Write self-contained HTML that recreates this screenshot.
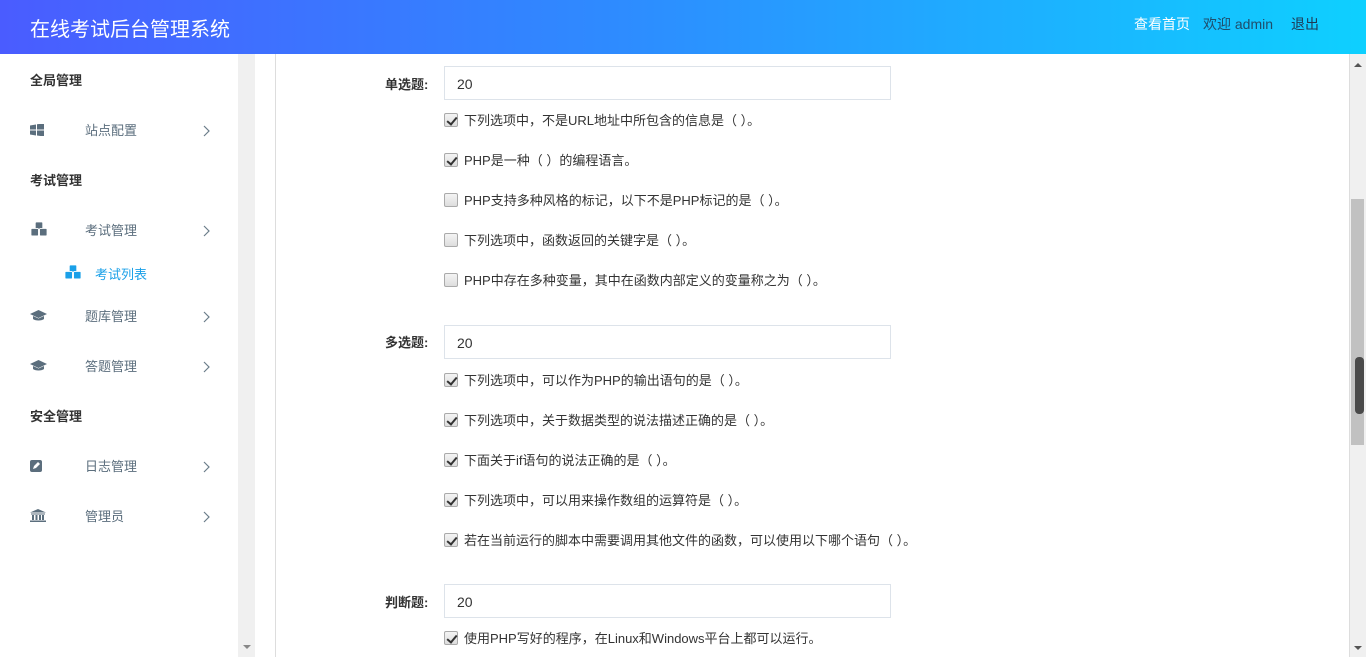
<!DOCTYPE html>
<html><head><meta charset="utf-8"><style>
*{margin:0;padding:0;box-sizing:border-box}
body{width:1366px;height:657px;overflow:hidden;position:relative;background:#fff;font-family:"Liberation Sans","Noto Sans CJK SC",sans-serif;font-size:13px;color:#333}
.hd{position:absolute;left:0;top:0;width:1366px;height:54px;background:linear-gradient(90deg,#4a5cff 0%,#2e8bff 45%,#0ed0ff 100%)}
.hd .t{position:absolute;left:30px;top:13px;color:#fff;font-size:20px}
.hd .r{position:absolute;top:14px;font-size:14px}
.a{position:absolute;font-size:13px}
.sec{position:absolute;left:30px;font-weight:bold;font-size:13px;color:#333}
.it{position:absolute;left:85px;color:#5b6e7d;font-size:13px}
.ic{position:absolute;left:30px;width:14px;height:12px}
.ar{position:absolute;left:203px;width:7px;height:12px}
.lb{position:absolute;left:385px;font-weight:bold;font-size:13px;color:#333}
.in{position:absolute;left:444px;width:447px;height:34px;border:1px solid #dde3ea;padding-left:12px;line-height:34px;font-size:14px;color:#333}
.cb{position:absolute;left:444px;width:14px;height:14px;border:1px solid #aaa;border-radius:2px;background:linear-gradient(#f4f4f4,#ddd)}
.cb.c::after{content:"";position:absolute;left:4px;top:1px;width:4px;height:8px;border:solid #333;border-width:0 2px 2px 0;transform:rotate(40deg)}
.q{position:absolute;left:464px;font-size:13px;color:#333}
</style></head><body>
<div class="hd"><div class="t">在线考试后台管理系统</div>
<div class="r" style="left:1134px;color:#fff">查看首页</div>
<div class="r" style="left:1203px;color:#1f4d6b">欢迎 admin</div>
<div class="r" style="left:1291px;color:#1f3a55">退出</div></div>

<div style="position:absolute;left:238px;top:54px;width:17px;height:603px;background:#f0f0f0"></div>
<div style="position:absolute;left:243px;top:645px;border:4px solid transparent;border-top:4px solid #888;border-bottom:0"></div>
<div style="position:absolute;left:275px;top:54px;width:1px;height:603px;background:#ddd"></div>
<div style="position:absolute;left:1349px;top:54px;width:17px;height:603px;background:#f0f0f0;border-left:1px solid #ddd"></div>
<div style="position:absolute;left:1351px;top:199px;width:13px;height:246px;background:#c1c1c1"></div>
<div style="position:absolute;left:1355px;top:357px;width:9px;height:57px;background:#4a4a4a;border-radius:4px"></div>
<div style="position:absolute;left:1354px;top:63px;border:4px solid transparent;border-bottom:4px solid #555;border-top:0"></div>
<div style="position:absolute;left:1354px;top:646px;border:4px solid transparent;border-top:4px solid #555;border-bottom:0"></div>

<div class="sec" style="top:70px">全局管理</div>
<svg class="ic" style="top:124px" viewBox="0 0 14 12"><path fill="#5b6e7d" d="M0 1.5l6-1v5H0zM7 .3l7-1v6.2H7zM0 6.5h6v5l-6-1zM7 6.5h7v6l-7-1z"/></svg>
<div class="it" style="top:120px">站点配置</div><svg class="ar" style="top:125px" viewBox="0 0 7 12"><path d="M1 1l5 5-5 5" fill="none" stroke="#6b7d8a" stroke-width="1.2"/></svg>
<div class="sec" style="top:170px">考试管理</div>
<svg class="ic" style="top:222px;width:18px;height:15px" viewBox="0 0 16 14"><g fill="#5b6e7d" stroke="#fff" stroke-width=".8"><rect x="4.5" y="0" width="7" height="7" rx="1"/><rect x="0.5" y="6" width="7" height="7" rx="1"/><rect x="8.5" y="6" width="7" height="7" rx="1"/></g></svg>
<div class="it" style="top:220px">考试管理</div><svg class="ar" style="top:225px" viewBox="0 0 7 12"><path d="M1 1l5 5-5 5" fill="none" stroke="#6b7d8a" stroke-width="1.2"/></svg>
<svg style="position:absolute;left:64px;top:265px" width="18" height="15" viewBox="0 0 16 14"><g fill="#1aa0e8" stroke="#fff" stroke-width=".8"><rect x="4.5" y="0" width="7" height="7" rx="1"/><rect x="0.5" y="6" width="7" height="7" rx="1"/><rect x="8.5" y="6" width="7" height="7" rx="1"/></g></svg>
<div class="a" style="left:95px;top:264px;color:#1aa0e8">考试列表</div>
<svg class="ic" style="top:310px;width:17px" viewBox="0 0 17 12"><path fill="#5b6e7d" d="M8.5 0L17 4 8.5 8 0 4zM3 6v3c2 2 9 2 11 0V6l-5.5 2.5z"/></svg>
<div class="it" style="top:306px">题库管理</div><svg class="ar" style="top:311px" viewBox="0 0 7 12"><path d="M1 1l5 5-5 5" fill="none" stroke="#6b7d8a" stroke-width="1.2"/></svg>
<svg class="ic" style="top:360px;width:17px" viewBox="0 0 17 12"><path fill="#5b6e7d" d="M8.5 0L17 4 8.5 8 0 4zM3 6v3c2 2 9 2 11 0V6l-5.5 2.5z"/></svg>
<div class="it" style="top:356px">答题管理</div><svg class="ar" style="top:361px" viewBox="0 0 7 12"><path d="M1 1l5 5-5 5" fill="none" stroke="#6b7d8a" stroke-width="1.2"/></svg>
<div class="sec" style="top:406px">安全管理</div>
<svg class="ic" style="top:460px;width:12px" viewBox="0 0 12 12"><rect width="12" height="12" rx="2" fill="#5b6e7d"/><path d="M3 9l1-3 4-4 2 2-4 4z" fill="#fff"/></svg>
<div class="it" style="top:456px">日志管理</div><svg class="ar" style="top:461px" viewBox="0 0 7 12"><path d="M1 1l5 5-5 5" fill="none" stroke="#6b7d8a" stroke-width="1.2"/></svg>
<svg class="ic" style="top:509px;width:16px;height:13px" viewBox="0 0 16 13"><path fill="#5b6e7d" d="M8 0l8 3.5H0zM1 4.5h14v1H1zM2 6h2v5H2zM5.5 6h2v5h-2zM9 6h2v5H9zM12 6h2v5h-2zM0 11.5h16V13H0z"/></svg>
<div class="it" style="top:506px">管理员</div><svg class="ar" style="top:511px" viewBox="0 0 7 12"><path d="M1 1l5 5-5 5" fill="none" stroke="#6b7d8a" stroke-width="1.2"/></svg>

<div class="lb" style="top:74px">单选题:</div><div class="in" style="top:66px">20</div>
<div class="cb c" style="top:113px"></div><div class="q" style="top:110px">下列选项中，不是URL地址中所包含的信息是（ ）。</div>
<div class="cb c" style="top:153px"></div><div class="q" style="top:150px">PHP是一种（ ）的编程语言。</div>
<div class="cb" style="top:193px"></div><div class="q" style="top:190px">PHP支持多种风格的标记，以下不是PHP标记的是（ ）。</div>
<div class="cb" style="top:233px"></div><div class="q" style="top:230px">下列选项中，函数返回的关键字是（ ）。</div>
<div class="cb" style="top:273px"></div><div class="q" style="top:270px">PHP中存在多种变量，其中在函数内部定义的变量称之为（ ）。</div>

<div class="lb" style="top:332px">多选题:</div><div class="in" style="top:325px">20</div>
<div class="cb c" style="top:373px"></div><div class="q" style="top:370px">下列选项中，可以作为PHP的输出语句的是（ ）。</div>
<div class="cb c" style="top:413px"></div><div class="q" style="top:410px">下列选项中，关于数据类型的说法描述正确的是（ ）。</div>
<div class="cb c" style="top:453px"></div><div class="q" style="top:450px">下面关于if语句的说法正确的是（ ）。</div>
<div class="cb c" style="top:493px"></div><div class="q" style="top:490px">下列选项中，可以用来操作数组的运算符是（ ）。</div>
<div class="cb c" style="top:533px"></div><div class="q" style="top:530px">若在当前运行的脚本中需要调用其他文件的函数，可以使用以下哪个语句（ ）。</div>

<div class="lb" style="top:592px">判断题:</div><div class="in" style="top:584px">20</div>
<div class="cb c" style="top:631px"></div><div class="q" style="top:628px">使用PHP写好的程序，在Linux和Windows平台上都可以运行。</div>
</body></html>
